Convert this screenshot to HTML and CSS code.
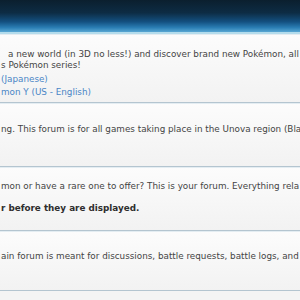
FILE: index.html
```html
<!DOCTYPE html>
<html>
<head>
<meta charset="utf-8">
<link rel="stylesheet" href="styles.css">
</head>
<body>
<div class="page">
  <div class="header"></div>
  <div class="row row1">
    <div class="ln first">a new world (in 3D no less!) and discover brand new Pokémon, all</div>
    <div class="ln">s Pokémon series!</div>
    <a class="ln link l1" href="#">(Japanese)</a>
    <a class="ln link l2" href="#">mon Y (US - English)</a>
  </div>
  <div class="row row2">
    <div class="ln">ng. This forum is for all games taking place in the Unova region (Bla</div>
  </div>
  <div class="row row3">
    <div class="ln">mon or have a rare one to offer? This is your forum. Everything rela</div>
    <div class="ln bold">r before they are displayed.</div>
  </div>
  <div class="row row4">
    <div class="ln">ain forum is meant for discussions, battle requests, battle logs, and</div>
  </div>
</div>
</body>
</html>
```
FILE: styles.css
```css
html, body {
  margin: 0;
  padding: 0;
  width: 300px;
  height: 300px;
  overflow: hidden;
  background: #f4f4f4;
}
.page {
  width: 300px;
  font-family: "DejaVu Sans", Verdana, sans-serif;
  font-size: 8.8px;
  color: #444;
}
.header {
  height: 32px;
  background: linear-gradient(to bottom, #0b1f2e 0%, #0d2c44 40%, #135080 68%, #2a7db3 86%, #58a7d3 100%);
  border-bottom: 2px solid #b4dcec;
}
.row {
  padding-left: 1px;
  background: linear-gradient(to bottom, #fcfcfc, #f2f2f2);
  border-top: 1px solid #e4edf2;
  border-bottom: 1px solid #b4c5d0;
}
.ln {
  display: block;
  white-space: nowrap;
  line-height: 11px;
  height: 11px;
}
.first { padding-left: 7px; }
.link { color: #4a86c6; text-decoration: none; }
.row1 { padding-top: 14px; padding-bottom: 4px; }
.l1 { margin-top: 3px; }
.l2 { margin-top: 2px; }
.row2 { padding-top: 20px; padding-bottom: 31px; }
.row3 { padding-top: 13px; padding-bottom: 16px; }
.bold { font-weight: bold; margin-top: 11px; color: #2e2e2e; }
.row4 { padding-top: 19px; padding-bottom: 28px; }
```
